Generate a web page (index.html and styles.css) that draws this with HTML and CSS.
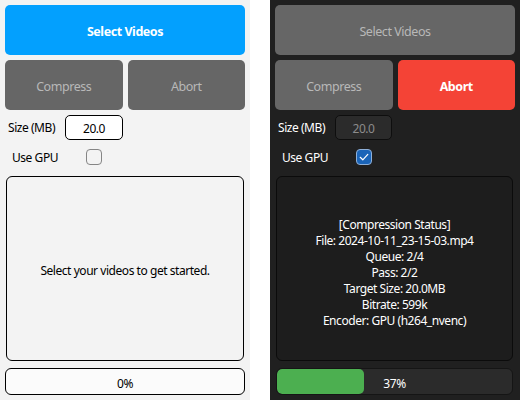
FILE: index.html
```html
<!DOCTYPE html>
<html>
<head>
<meta charset="utf-8">
<link rel="stylesheet" href="styles.css">
</head>
<body>
<div class="screen">
  <div class="panel light">
    <div class="btn btn-blue">Select Videos</div>
    <div class="btn-row">
      <div class="btn btn-gray">Compress</div>
      <div class="btn btn-gray">Abort</div>
    </div>
    <div class="size-row">
      <span class="size-label">Size (MB)</span>
      <div class="size-input">20.0</div>
    </div>
    <div class="gpu-row">
      <span class="gpu-label">Use GPU</span>
      <span class="check"></span>
    </div>
    <div class="status">
      <div class="status-text">Select your videos to get started.</div>
    </div>
    <div class="progress">
      <div class="progress-fill" style="width:0%"></div>
      <span class="progress-label">0%</span>
    </div>
  </div>
  <div class="panel dark">
    <div class="btn btn-gray">Select Videos</div>
    <div class="btn-row">
      <div class="btn btn-gray">Compress</div>
      <div class="btn btn-red">Abort</div>
    </div>
    <div class="size-row">
      <span class="size-label">Size (MB)</span>
      <div class="size-input">20.0</div>
    </div>
    <div class="gpu-row">
      <span class="gpu-label">Use GPU</span>
      <span class="check checked">
        <svg width="12" height="12" viewBox="0 0 12 12"><path d="M2.2 6.3 L4.8 8.8 L9.8 3.4" fill="none" stroke="#ffffff" stroke-width="1.2" stroke-linecap="round" stroke-linejoin="round"/></svg>
      </span>
    </div>
    <div class="status">
      <div class="status-text">[Compression Status]<br>File: 2024-10-11_23-15-03.mp4<br>Queue: 2/4<br>Pass: 2/2<br>Target Size: 20.0MB<br>Bitrate: 599k<br>Encoder: GPU (h264_nvenc)</div>
    </div>
    <div class="progress">
      <div class="progress-fill" style="width:37%"></div>
      <span class="progress-label">37%</span>
    </div>
  </div>
</div>
</body>
</html>
```

FILE: styles.css
```css
html, body {
  margin: 0;
  padding: 0;
  background: #ffffff;
}
body {
  width: 520px;
  height: 400px;
  overflow: hidden;
  font-family: "Segoe UI", "Noto Sans", "Open Sans", sans-serif;
  font-size: 12px;
  letter-spacing: -0.45px;
}
.screen {
  display: flex;
  gap: 20px;
  height: 400px;
}
.panel {
  width: 250px;
  height: 400px;
  box-sizing: border-box;
  padding: 5px;
  display: flex;
  flex-direction: column;
}
.light { background: #f3f3f3; color: #000000; }
.dark { background: #202020; color: #ffffff; }

.btn {
  height: 50px;
  border-radius: 5px;
  display: flex;
  align-items: center;
  justify-content: center;
  font-size: 12.5px;
  box-sizing: border-box;
  padding-top: 3px;
}
.btn-row {
  display: flex;
  gap: 5px;
  margin-top: 5px;
}
.btn-row .btn { flex: 1; }
.btn-blue { background: #03a0fe; color: #ffffff; font-weight: bold; }
.btn-gray { background: #666666; color: #b8b8b8; }
.btn-red { background: #f44336; color: #ffffff; font-weight: bold; }

.size-row {
  display: flex;
  align-items: center;
  margin-top: 5px;
  height: 25px;
}
.size-label {
  width: 57px;
  padding-left: 3px;
  padding-top: 1px;
}
.size-input {
  width: 58px;
  height: 25px;
  box-sizing: border-box;
  border-radius: 5px;
  display: flex;
  align-items: center;
  justify-content: center;
  padding-top: 2px;
}
.light .size-input { background: #ffffff; border: 1px solid #000000; }
.dark .size-input { background: #2b2b2b; border: 1px solid #0e0e0e; color: #8c8c8c; width: 57px; }

.gpu-row {
  display: flex;
  align-items: center;
  margin-top: 9px;
  height: 16px;
}
.gpu-label {
  width: 74px;
  padding-left: 7px;
  padding-top: 2px;
}
.check {
  width: 16px;
  height: 16px;
  box-sizing: border-box;
  border-radius: 4px;
  border: 1.5px solid #858585;
  display: flex;
  align-items: center;
  justify-content: center;
}
.check.checked {
  background: #1a64b8;
  border: 1px solid #8fb0d8;
}

.status {
  margin: 11px 1px 0 1px;
  height: 187px;
  box-sizing: border-box;
  border-radius: 6px;
  display: flex;
  align-items: center;
  justify-content: center;
  text-align: center;
  padding-top: 6px;
}
.light .status { background: #f3f3f3; border: 1px solid #000000; }
.dark .status { background: #1d1d1d; border: 1px solid #0b0b0b; margin-right: 2px; padding-top: 9px; }
.status-text { line-height: 16px; }

.progress {
  position: relative;
  margin-top: 7px;
  height: 27px;
  box-sizing: border-box;
  border-radius: 6px;
  overflow: hidden;
  display: flex;
  align-items: center;
  justify-content: center;
  padding-top: 3px;
}
.light .progress { background: #fbfbfb; border: 1px solid #000000; }
.dark .progress { background: #2b2b2b; border: 1px solid #151515; margin: 7px 2px 0 1px; }
.progress-fill {
  position: absolute;
  left: 0;
  top: 0;
  bottom: 0;
  background: #4caf50;
  border-radius: 5px;
}
.progress-label { position: relative; }
```
